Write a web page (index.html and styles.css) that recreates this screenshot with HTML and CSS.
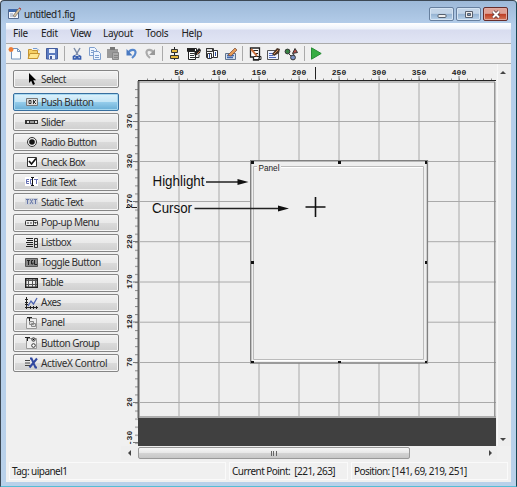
FILE: index.html
```html
<!DOCTYPE html>
<html lang="en">
<head>
<meta charset="utf-8">
<title>untitled1.fig</title>
<link rel="stylesheet" href="styles.css">
</head>
<body>
<div class="window">
  <header class="titlebar">
    <svg class="app-icon" width="14" height="13" viewBox="0 0 14 13"><path fill="#f5f8ff" stroke="#53698e" d="M.5 2.500h10v9H.5z"/><path fill="#3e67a9" d="M1 2h9v3H1z"/><path stroke="#8797b1" d="M2 7h3M2 9h3"/><path fill="#d8c3a2" stroke="#555" stroke-width=".6" d="M5 9l5-7 2-1 1 1-6 8z"/><path stroke="#c33" d="M11 1l2 1"/></svg>
    <span class="title">untitled1.fig</span>
    <div class="controls">
      <span class="control"><svg width="24" height="13"><rect x="8" y="6.500" width="8" height="3" rx="1" fill="#eee" stroke="#56606e"/></svg></span>
      <span class="control"><svg width="24" height="13"><path fill="#eee" stroke="#56606e" d="M8.500 3.500h7v6h-7z"/><path fill="#7793b5" stroke="#56606e" d="M10.500 5.500h3v2h-3z"/></svg></span>
      <span class="control close"><svg width="24" height="13"><path stroke="#5d3a3c" stroke-width="3.600" d="M9 3.500l6 6M15 3.500l-6 6"/><path stroke="#fff" stroke-width="2" d="M9 3.500l6 6M15 3.500l-6 6"/></svg></span>
    </div>
  </header>
  <div class="client">
    <nav class="menubar"><span class="m-file">File</span><span class="m-edit">Edit</span><span class="m-view">View</span><span class="m-layout">Layout</span><span class="m-tools">Tools</span><span class="m-help">Help</span></nav>
    <div class="toolbar">
      <svg width="505" height="19" viewBox="6 44 505 19" fill="none">
        <g><path fill="#fbfdff" stroke="#7193bd" d="M11.500 48.500h6l3 3v7.500h-9z"/><path stroke="#7193bd" d="M17.500 48.500v3h3"/><path stroke="#ef7d36" stroke-width="1.400" d="M8.500 49.500h5M11 47v5M9.300 47.800l3.400 3.400M12.700 47.800l-3.400 3.400"/></g>
        <g><path fill="#f5cf62" stroke="#c49331" d="M28.500 58.500v-9h3l1 1h5v8z"/><path fill="#ffe78f" stroke="#c49331" d="M28 58.500l2-5h9.500l-2 5z"/><path stroke="#739bd1" d="M33 48.500h4l2 2"/></g>
        <g><path fill="#5b7bc0" stroke="#425b9d" d="M46.500 48.500h11v10.500h-11z"/><path fill="#e9effb" d="M49 49h6v4h-6zM49 55h6v4h-6z"/><path fill="#425b9d" d="M50 56h2v3h-2z"/></g>
        <path stroke="#aaa" d="M64.500 46v15M162.500 46v15M242.500 46v15M304.500 46v15"/>
        <g><path stroke="#7b8ba7" stroke-width="1.500" d="M74 48l4 7M80 48l-4 7"/><path stroke="#345bad" stroke-width="1.700" d="M75.500 55.500l-2 1v2.500h2.500l.5-3M78.500 55.500l2 1v2.500h-2.500l-.5-3"/></g>
        <g stroke="#7f9fcd" fill="#eef5ff"><path d="M89.500 47.500h5l2 2v6h-7z"/><path d="M93.500 51.500h5l2 2v6h-7z"/><path d="M91 50.500h3M91 52.500h2M95 55.500h4M95 57.500h4"/></g>
        <g fill="#999"><path d="M107 49h11v9h-11z"/><path fill="#777" d="M110 47h5v3h-5z"/><path fill="#aaa" stroke="#888" d="M112.500 52.500h6v7h-6z"/><path stroke="#888" d="M114 55.500h4M114 57.500h4"/></g>
        <path stroke="#5586cc" stroke-width="2.200" d="M128 53c2-4 8-4.500 7.500 0-.2 2-1 3-3.500 5"/><path fill="#4a7ac1" d="M126.500 49v6.500h6z"/>
        <path stroke="#aaa" stroke-width="2.200" d="M154 53c-2-4-8-4.500-7.500 0 .2 2 1 3 3.500 5"/><path fill="#999" d="M155 49v6h-6z"/>
        <g><path stroke="#222" d="M174.500 47v13"/><path fill="#e4b73e" stroke="#333" d="M171.500 49.500h6v3h-6zM170.500 55.500h8v3h-8z"/></g>
        <g><path fill="#fff" stroke="#222" d="M187.500 48.500h9v3h-9zM188.500 51.500h7v8h-7z"/><path fill="#222" d="M187 48h8v3h-8zM194 53l5-5 2 2-1 3-5 3z"/><path stroke="#333" d="M190 53.500h4M190 55.500h4M190 57.500h9v-3"/><path stroke="#bd6d42" d="M197 54l3-3"/></g>
        <g fill="#fff" stroke="#333"><path d="M206.500 48.500h7v9h-7z"/><path fill="#ddd" d="M206.500 48.500h6v3h-6z"/><path d="M207.500 53.500h4v5h-4zM213.500 50.500h4v7h-4z"/><path stroke="#3151a2" d="M209.500 54v4M215.500 52v4"/></g>
        <g><path fill="#d4e0ee" stroke="#60728c" d="M225.500 53.500h10v6h-10z"/><path stroke="#4168af" stroke-width="1.400" d="M227 55.500h7M227 57.500h6"/><path fill="#e69c57" stroke="#754839" stroke-width=".7" d="M228 55l7-7 2 2-6 6z"/></g>
        <g><path fill="#fff" stroke="#222" stroke-width="1.300" d="M250.500 48h9v9l-1 3h-5v-3h-3z"/><path stroke="#222" d="M253 50.500h5M254 53.500h4M254 56.500h7v3h-7"/><path stroke="#ca7341" stroke-width="2" d="M251 49l6 7"/></g>
        <g><path fill="#edf2ff" stroke="#555" d="M267.500 50.500h11v9h-11z"/><path stroke="#4c67ba" d="M269 53.500h5M269 55.500h4M269 57.500h7"/><path fill="#493528" d="M272 54l5-6 3 1-1 4-5 3z"/><path stroke="#d18a56" d="M274 54l4-4"/></g>
        <g stroke="#333"><circle cx="287.500" cy="51.500" r="2.400" fill="#378143"/><path fill="#bb4c45" d="M292.500 53.500l2.500-5 2.500 4z"/><path d="M289 54l3 3 2-3"/><circle cx="293" cy="57.500" r="2.400" fill="#7991c6"/></g>
        <path fill="#37ad43" stroke="#288b36" d="M311.500 47.800v11.400l9.700-5.700z"/>
      </svg>
    </div>
    <main class="editor">
      <aside class="palette">
        <button class="tool select"><svg viewBox="0 0 14 12"><path fill="#000" d="M4 0v10l2.200-2.200L8 12l2-1-1.800-3.800h3z"/></svg><span>Select</span></button>
        <button class="tool active"><svg viewBox="0 0 14 12"><path fill="#ddd" stroke="#777" d="M1.500 2.500h11v7h-11z"/><path fill="none" stroke="#333" d="M4 4.500h2v3H4zM8.500 4v4M11 4L9 6l2 2"/></svg><span>Push Button</span></button>
        <button class="tool"><svg viewBox="0 0 14 12"><path fill="#333" d="M0 4h13v4H0z"/><path fill="#ddd" d="M2 5h2v2H2zM10 5h2v2h-2z"/><path fill="#999" d="M5 5h4v2H5z"/></svg><span>Slider</span></button>
        <button class="tool"><svg viewBox="0 0 14 12"><circle cx="7" cy="6" r="4.500" fill="#eee" stroke="#333"/><circle cx="7" cy="6" r="2.800" fill="#111"/></svg><span>Radio Button</span></button>
        <button class="tool"><svg viewBox="0 0 14 12"><path fill="#fff" stroke="#333" d="M2.500 1.500h9v9h-9z"/><path fill="none" stroke="#111" stroke-width="1.700" d="M4 5l2.500 3L11 2.500"/></svg><span>Check Box</span></button>
        <button class="tool"><svg viewBox="0 0 14 12"><path fill="#fff" d="M0 1h13v9H0z"/><path fill="none" stroke="#6570b3" d="M4 3.500H1.500v4H4M2 5.500h2M5.500 3v5h2V3.500h-2M9 3.500h4M11.500 3v5"/><path fill="none" stroke="#111" d="M6 1.500h3M7.500 2v7M6 9.500h3"/></svg><span>Edit Text</span></button>
        <button class="tool"><svg viewBox="0 0 14 12"><path fill="#ccd0d8" d="M0 2h13v7H0z"/><path fill="none" stroke="#6676a8" d="M1 3.500h3M2.500 4v4M5 3l3 5M8 3L5 8M9 3.500h3M10.500 4v4"/></svg><span>Static Text</span></button>
        <button class="tool"><svg viewBox="0 0 14 12"><rect x=".5" y="3.500" width="12" height="5" rx="1" fill="#eee" stroke="#333"/><path fill="none" stroke="#444" d="M2 6h2M5 6h2M8.500 4v4"/><path fill="#333" d="M9 5h3l-1.500 2z"/></svg><span>Pop-up Menu</span></button>
        <button class="tool"><svg viewBox="0 0 14 12"><path stroke="#222" d="M1 1.500h7M2 3.500h6M1 5.500h7M2 7.500h6M1 9.500h7"/><path fill="#ddd" stroke="#333" d="M9.500 1.500h3v9h-3z"/><path stroke="#333" d="M10 4.500h2M10 7.500h2"/></svg><span>Listbox</span></button>
        <button class="tool"><svg viewBox="0 0 14 12"><path fill="#888" stroke="#555" d="M.5 1.500h12v8H.5z"/><path fill="none" stroke="#222" d="M2 3.500h3M3.500 4v4M8 3.500H6.500v3.500H8V5.500M9.500 3v4.500H12"/></svg><span>Toggle Button</span></button>
        <button class="tool"><svg viewBox="0 0 14 12"><path fill="#eee" stroke="#222" stroke-width="1.400" d="M.7 1.700h11.600v8.600H.7z"/><path stroke="#555" d="M1 3.500h11M3.500 2v8M7.500 2v8M10.500 2v8M1 7.500h11"/></svg><span>Table</span></button>
        <button class="tool"><svg viewBox="0 0 14 12"><path fill="none" stroke="#222" d="M1.500 0v12M0 10.500h13M0 2.500h3M0 5.500h3M0 7.500h3M5.500 9v3M8.500 9v3M11.500 9v3"/><path fill="none" stroke="#4c63b0" stroke-width="1.300" d="M3 9l3-5 2.500 3L12 1"/></svg><span>Axes</span></button>
        <button class="tool"><svg viewBox="0 0 14 12"><path fill="#eee" stroke="#999" d="M1.500 1.500h10v10h-10z"/><path stroke="#222" d="M2 .5h5M4.500 0v4"/><path fill="#ddd" stroke="#888" d="M4.500 4.500h4v3h-4zM6.500 6.500h4v3h-4z"/></svg><span>Panel</span></button>
        <button class="tool"><svg viewBox="0 0 14 12"><path fill="#eee" stroke="#999" d="M1.500 1.500h10v10h-10z"/><path stroke="#222" d="M0 .5h5M2.500 0v4"/><g fill="#fff" stroke="#333"><circle cx="8.500" cy="2.500" r="1.700"/><circle cx="8.500" cy="8.500" r="1.800"/></g><circle cx="8.500" cy="2.500" r=".8"/></svg><span>Button Group</span></button>
        <button class="tool"><svg viewBox="0 0 14 12"><path stroke="#444" d="M0 3.500h5M0 6h5M0 8.500h5"/><path fill="none" stroke="#3148a0" stroke-width="2" d="M4.500 10.500L12 1.500M5 1.500h1.500l4 9H12"/></svg><span class="wide">ActiveX Control</span></button>
      </aside>
      <section class="layout">
        <svg class="canvas" width="376" height="382" viewBox="121 64 376 382">
          <defs>
            <pattern id="xticks" patternUnits="userSpaceOnUse" x="139" y="77" width="8" height="4"><path stroke="#888" d="M.5 1.500v3"/></pattern>
            <pattern id="yticks" patternUnits="userSpaceOnUse" x="135" y="80.900" width="3" height="8.040"><path stroke="#888" d="M0 .5h3"/></pattern>
          </defs>
          <path fill="url(#xticks)" d="M146 77h350v4H146z"/>
          <path fill="url(#yticks)" d="M135 88h3v357h-3z"/>
          <path stroke="#777" d="M179 76v4M219 76v4M259 76v4M299 76v4M339 76v4M379 76v4M419 76v4M459 76v4M133 121.500h5M133 161.500h5M133 201.500h5M133 241.500h5M133 282h5M133 322h5M133 362.500h5M133 402.500h5M133 442.500h5"/>
          <path fill="#efefef" d="M139 81h356v336H139z"/>
          <path stroke="#c6c6c6" stroke-width="1.700" d="M179 83v333M219 83v333M259 83v333M299 83v333M339 83v333M379 83v333M419 83v333M459 83v333"/>
          <path stroke="#aaa" d="M140 121.500h356M140 161.500h356M140 201.500h356M140 241.700h356M140 282h356M140 322.200h356M140 362.500h356M140 402.500h356"/>
          <path stroke="#aaa" stroke-width="1.500" d="M139 82h356"/>
          <path stroke="#222" d="M138 80.500h358"/>
          <path stroke="#666" stroke-width="2" d="M138.500 81v337"/>
          <path stroke="#888" stroke-width="1.300" d="M494.800 82v335"/>
          <path stroke="#999" stroke-width="1.500" d="M139 417h357"/>
          <path fill="#404040" d="M138 418h358v28H138z"/>
          <g class="ruler-label">
            <text x="179" y="75">50</text><text x="219" y="75">100</text><text x="259" y="75">150</text><text x="299" y="75">200</text><text x="339" y="75">250</text><text x="379" y="75">300</text><text x="419" y="75">350</text><text x="459" y="75">400</text>
            <text transform="translate(132 121)rotate(-90)">370</text><text transform="translate(132 161)rotate(-90)">320</text><text transform="translate(132 201)rotate(-90)">270</text><text transform="translate(132 241.500)rotate(-90)">220</text><text transform="translate(132 281.500)rotate(-90)">170</text><text transform="translate(132 321.500)rotate(-90)">120</text><text transform="translate(132 362)rotate(-90)">70</text><text transform="translate(132 402)rotate(-90)">20</text><text transform="translate(132 438)rotate(-90)">-30</text>
          </g>
          <path stroke="#222" d="M315.500 67v12M126 207.500h4M132 207.500h5"/>
          <path fill="#efefef" stroke="#808080" stroke-width="1.400" d="M250.700 160.700h176.700v202.300H250.700z"/>
          <path fill="none" stroke="#fff" d="M254.500 167.500h169v193h-170"/>
          <path fill="none" stroke="#bbb" d="M253.500 166.500h170v193h-170z"/>
          <path fill="#efefef" d="M257 164h24v6h-24z"/>
          <text class="panel-label" x="258.500" y="171" textLength="21" lengthAdjust="spacingAndGlyphs">Panel</text>
          <path fill="#111" d="M251 161h3v3h-3zM338 161h3v3h-3zM425 161h2v3h-2zM251 261h3v3h-3zM425 261h2v3h-2zM251 361h3v2h-3zM338 361h3v2h-3zM425 361h2v2h-2z"/>
          <path stroke="#111" stroke-width="1.600" d="M305.500 207h20M315.500 197v20"/>
          <text class="note" x="152.500" y="186" textLength="52" lengthAdjust="spacingAndGlyphs">Highlight</text>
          <text class="note" x="152" y="213" textLength="40" lengthAdjust="spacingAndGlyphs">Cursor</text>
          <path stroke="#222" stroke-width="1.400" d="M206 182h34M194.500 208.500h86"/>
          <path fill="#111" d="M237.500 179l11 3-11 3zM278 205.500l11 3-11 3z"/>
        </svg>
        <div class="vscroll"><i class="arrow up"></i><i class="arrow down"></i></div>
        <div class="hscroll"><i class="arrow left"></i><div class="thumb"><i></i><i></i><i></i></div><i class="arrow right"></i></div>
      </section>
    </main>
    <footer class="statusbar"><span class="tag">Tag: uipanel1</span><span class="point">Current Point:&nbsp; [221, 263]</span><span class="position">Position: [141, 69, 219, 251]</span></footer>
  </div>
</div>
</body>
</html>
```

FILE: styles.css
```css
* { box-sizing: border-box; }
body { margin: 0; overflow: hidden; font: 10px/13px "Noto Sans", sans-serif; color: #202020; }
.window { width: 517px; height: 487px; padding: 0 5px 4px; border: 1px solid #3c4854; border-right-color: #174653; border-bottom-color: #55bdd5; border-radius: 4px 4px 0 0; background: linear-gradient(#9db9d8, #b4cdea 24px, #b9d1ea); }
.titlebar { height: 22px; display: flex; align-items: flex-start; padding: 6px 3px 0 2px; }
.app-icon { margin-right: 2px; }
.title { flex: 1; padding-top: 1px; letter-spacing: -.48px; }
.controls { display: flex; gap: 2px; }
.control { width: 25px; height: 14px; border: 1px solid #667f9e; border-radius: 2px; background: linear-gradient(#c3d5e8 45%, #94b2d1 50%, #b9d3eb); box-shadow: inset 0 0 0 1px #d5e4f3; }
.control svg { display: block; margin: -.5px 0 0 -.5px; fill: none; }
.close { border-color: #672d2b; background: linear-gradient(#dfa297 45%, #bd3c23 50%, #d5785b); box-shadow: inset 0 0 0 1px #e2aaa0; }
.client { height: 459px; display: grid; grid-template-rows: 21px 20px 398px 20px; background: #f0f0f0; }
.menubar { display: flex; align-items: center; padding: 0 0 0 7px; border-bottom: 1px solid #aaa; background: linear-gradient(#fff, #edf2fb 6px, #d8dcef 7px, #e1e5f4); }
.m-file { width: 28px; }
.m-edit { width: 29.5px; }
.m-view { width: 32.5px; }
.m-layout { width: 42.5px; }
.m-tools { width: 36px; }
.menubar span { letter-spacing: -.3px; }
.toolbar { border-bottom: 1px solid #aaa; }
.toolbar svg { display: block; }
.editor { display: grid; grid-template-columns: 115px 390px; }
.palette { display: flex; flex-direction: column; gap: 2.08px; padding: 6px 2px 0 7px; }
.tool { flex: none; display: flex; align-items: center; gap: 2px; width: 106px; height: 18px; padding: 0 0 0 11px; border: 1px solid #858585; border-radius: 2px; background: linear-gradient(#f2f2f2, #e9e9e9 48%, #dadada 52%, #cfcfcf); box-shadow: inset 0 0 0 1px #f6f6f6; font: inherit; color: #303030; letter-spacing: -.5px; }
.tool svg { width: 14px; height: 12px; flex: none; }
.wide { letter-spacing: -.34px; }
.select { margin-bottom: 3px; }
.active { border-color: #386f9f; background: linear-gradient(#def2fc, #c3e5f6 48%, #94cceb 52%, #68add5); box-shadow: inset 0 0 0 1px #a7d8f0; }
.layout { display: grid; grid-template-columns: 376px 14px; grid-template-rows: 382px 14px; }
.canvas { display: block; }
.ruler-label { font: bold 8px "Liberation Mono", monospace; text-anchor: middle; fill: #222; }
.panel-label { font: 8.5px "Liberation Sans", sans-serif; fill: #222; }
.note { font: 14px "Liberation Sans", sans-serif; fill: #111; }
.vscroll { display: flex; flex-direction: column; justify-content: space-between; align-items: center; padding: 7px 3px 5px 0; border-left: 1px solid #f8f8f8; background: #eee; }
.arrow { width: 0; height: 0; border: 3px solid transparent; }
.up { border-top: 0; border-bottom-color: #444; }
.down { border-bottom: 0; border-top-color: #444; }
.hscroll { display: flex; align-items: center; padding: 0 5px 0 7px; width: 376px; background: #eee; }
.left { border-left: 0; border-right-color: #444; }
.right { margin-left: auto; border-right: 0; border-left-color: #444; }
.thumb { width: 272px; height: 12px; margin-left: 7px; border: 1px solid #999; border-radius: 2px; display: flex; align-items: center; justify-content: center; gap: 1px; background: linear-gradient(#f7f7f7, #e8e8e8 45%, #d4d4d4 50%, #c6c6c6); }
.thumb i { width: 1px; height: 5px; margin-right: .5px; background: #666; }
.statusbar { display: flex; gap: 3px; padding: 0 3px 2px; }
.statusbar span { border: 1px solid #fafafa; padding: 2px 0 0 2px; height: 18px; letter-spacing: -.54px; white-space: nowrap; }
.tag { width: 217px; }
.point { width: 119px; }
.position { width: 157px; }
```
